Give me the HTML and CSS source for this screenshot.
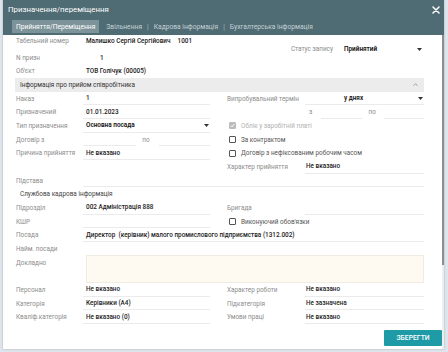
FILE: index.html
```html
<!DOCTYPE html>
<html lang="uk">
<head>
<meta charset="utf-8">
<title>Призначення/переміщення</title>
<link rel="stylesheet" href="styles.css">
</head>
<body>
<div class="dialog">
  <div class="header">
    <div class="title-row">
      <span class="title">Призначення/переміщення</span>
      <svg class="close" width="8" height="8" viewBox="0 0 8 8"><path d="M1 1L7 7M7 1L1 7" stroke="#fff" stroke-width="1.5" stroke-linecap="round"/></svg>
    </div>
    <div class="tabs">
      <span class="tab active">Прийняття/Переміщення</span>
      <span class="tab">Звільнення</span><span class="sep">|</span>
      <span class="tab">Кадрова інформація</span><span class="sep">|</span>
      <span class="tab">Бухгалтерська інформація</span>
    </div>
  </div>
  <div class="main">
    <div class="content">
      <div class="row">
        <div class="lbl">Табельний номер</div>
        <div class="val plain wide">Малишко Сергій Сергійович<span class="gap"></span>1001</div>
        <div class="rspan status"><span class="status-lbl">Статус запису</span><span class="strong">Прийнятий</span><svg class="caret" width="5" height="3" viewBox="0 0 5 3"><path d="M0 0H5L2.5 3Z" fill="#333"/></svg></div>
      </div>
      <div class="row">
        <div class="lbl">N призн</div>
        <div class="val plain num">1</div>
      </div>
      <div class="row">
        <div class="lbl">Об'єкт</div>
        <div class="val plain wide">ТОВ Голічук (00005)</div>
      </div>
      <div class="section">
        <span>Інформація про прийом співробітника</span>
        <svg class="chev" width="5" height="3" viewBox="0 0 5 3"><path d="M0.5 2.7L2.5 0.7L4.5 2.7" fill="none" stroke="#888" stroke-width="0.8"/></svg>
      </div>
      <div class="row">
        <div class="lbl">Наказ</div>
        <div class="val">1</div>
        <div class="rlbl">Випробувальний термін</div>
        <div class="rval select"><span class="strong days">у днях</span><svg class="caret" width="5" height="3" viewBox="0 0 5 3"><path d="M0 0H5L2.5 3Z" fill="#333"/></svg></div>
      </div>
      <div class="row">
        <div class="lbl">Призначений</div>
        <div class="val">01.01.2023</div>
        <div class="rval range"><span class="lbl-in">з</span><span class="line l1"></span><span class="lbl-in po">по</span><span class="line l2"></span></div>
      </div>
      <div class="row">
        <div class="lbl">Тип призначення</div>
        <div class="val select"><span class="strong">Основна посада</span><svg class="caret" width="5" height="3" viewBox="0 0 5 3"><path d="M0 0H5L2.5 3Z" fill="#333"/></svg></div>
        <div class="rspan check disabled"><span class="box checked"><svg width="5" height="5" viewBox="0 0 5 5"><path d="M0.8 2.6L2 3.8L4.2 1.2" fill="none" stroke="#fff" stroke-width="1"/></svg></span>Облік у заробітній платі</div>
      </div>
      <div class="row">
        <div class="lbl">Договір з</div>
        <div class="val range-left"><span class="line a"></span><span class="lbl-in">по</span><span class="line b"></span></div>
        <div class="rspan check"><span class="box"></span>За контрактом</div>
      </div>
      <div class="row">
        <div class="lbl">Причина прийняття</div>
        <div class="val">Не вказано</div>
        <div class="rspan check"><span class="box"></span>Договір з нефіксованим робочим часом</div>
      </div>
      <div class="row">
        <div class="rlbl">Характер прийняття</div>
        <div class="rval">Не вказано</div>
      </div>
      <div class="row">
        <div class="lbl">Підстава</div>
        <div class="val full"></div>
      </div>
      <div class="row">
        <div class="subhead">Службова кадрова інформація</div>
      </div>
      <div class="row">
        <div class="lbl">Підрозділ</div>
        <div class="val">002 Адміністрація 888</div>
        <div class="rlbl">Бригада</div>
        <div class="rval"></div>
      </div>
      <div class="row">
        <div class="lbl">КШР</div>
        <div class="val"></div>
        <div class="rspan check"><span class="box"></span>Виконуючий обов'язки</div>
      </div>
      <div class="row">
        <div class="lbl">Посада</div>
        <div class="val full">Директор&nbsp; (керівник) малого промислового підприємства (1312.002)</div>
      </div>
      <div class="row">
        <div class="lbl">Найм. посади</div>
      </div>
      <div class="row tall">
        <div class="lbl top">Докладно</div>
        <div class="memo"></div>
      </div>
      <div class="row">
        <div class="lbl">Персонал</div>
        <div class="val">Не вказано</div>
        <div class="rlbl">Характер роботи</div>
        <div class="rval">Не вказано</div>
      </div>
      <div class="row">
        <div class="lbl">Категорія</div>
        <div class="val">Керівники (А4)</div>
        <div class="rlbl">Підкатегорія</div>
        <div class="rval">Не зазначена</div>
      </div>
      <div class="row">
        <div class="lbl">Кваліф.категорія</div>
        <div class="val">Не вказано (0)</div>
        <div class="rlbl">Умови праці</div>
        <div class="rval">Не вказано</div>
      </div>
      <div class="footer">
        <button class="save">ЗБЕРЕГТИ</button>
      </div>
    </div>
    <div class="scroll"><div class="thumb"></div></div>
  </div>
</div>
</body>
</html>
```

FILE: styles.css
```css
html, body {
  margin: 0;
  padding: 0;
}
body {
  width: 448px;
  height: 352px;
  background: #dfe5ec;
  font-family: Roboto, "Liberation Sans", sans-serif;
  font-size: 6.4px;
  color: #222;
  overflow: hidden;
}
.dialog {
  width: 441px;
  height: 349px;
  margin-left: 3px;
  background: #fff;
  display: flex;
  flex-direction: column;
  box-shadow: 0 0 2px rgba(0,0,0,0.25);
}
.header {
  background: #4f6b73;
  height: 35px;
  box-sizing: border-box;
  padding: 0 4px 0 5px;
}
.title-row {
  height: 19px;
  display: flex;
  align-items: center;
  justify-content: space-between;
}
.title {
  color: #fff;
  font-size: 7.8px;
}
.tabs {
  margin-top: 1px;
  margin-left: 4px;
  height: 13px;
  display: flex;
  align-items: stretch;
  font-size: 6.7px;
}
.tab {
  display: flex;
  align-items: center;
  padding: 0 4px;
  color: #c3d1d5;
}
.tab.active {
  background: #7c9399;
  color: #fff;
  margin-right: 3px;
}
.sep {
  display: flex;
  align-items: center;
  color: #a9bcc1;
  padding: 0 1px;
}
.main {
  flex: 1;
  display: flex;
}
.content {
  flex: 1;
  padding: 2.2px 0 0 13px;
}
.scroll {
  width: 2px;
  background: #eceeef;
}
.thumb {
  height: 230px;
  background: #8a8f92;
}
.row {
  display: grid;
  grid-template-columns: 67px 127px 17px 78px 119px;
  height: 13.67px;
  width: 408px;
}
.lbl, .rlbl {
  display: flex;
  align-items: center;
  color: #8c8c8c;
  white-space: nowrap;
}
.lbl { grid-column: 1; }
.rlbl { grid-column: 4; }
.val, .rval {
  display: flex;
  align-items: center;
  border-bottom: 1px solid #ebebeb;
  box-sizing: border-box;
  white-space: nowrap;
  font-weight: 500;
  color: #1c1c1c;
}
.val { grid-column: 2; padding-left: 3px; }
.rval { grid-column: 5; padding-left: 1px; }
.val.plain { border-bottom: none; }
.val.wide { grid-column: 2 / 6; }
.val.full { grid-column: 2 / 6; }
.val.num { padding-left: 17px; }
.gap { display: inline-block; width: 7px; }
.strong { font-weight: 600; color: #111; }
.select { justify-content: space-between; padding-right: 1px; }
.rval.select { padding-left: 39px; }
.caret { flex: none; }
.rspan {
  grid-column: 4 / 6;
  display: flex;
  align-items: center;
  white-space: nowrap;
}
.status { padding-right: 2px; }
.status-lbl {
  width: 106px;
  text-align: right;
  color: #8c8c8c;
  margin-right: 11px;
}
.status .strong { flex: 1; }
.section {
  height: 13.67px;
  width: 409px;
  margin-left: -1px;
  background: #ececec;
  display: flex;
  align-items: center;
  justify-content: space-between;
  padding: 0 6px 0 5px;
  box-sizing: border-box;
  color: #333;
}
.range {
  border-bottom: none;
  padding-left: 4px;
}
.lbl-in {
  color: #8c8c8c;
  font-weight: 400;
}
.line {
  align-self: flex-end;
  height: 0;
  border-bottom: 1px solid #ebebeb;
}
.range .l1 { width: 42px; margin-left: 9px; }
.range .po { margin-left: 6px; }
.range .l2 { width: 41px; margin-left: 8px; }
.range-left {
  border-bottom: none;
  padding-left: 0;
}
.range-left .a { width: 54px; margin-right: 6px; }
.range-left .b { width: 52px; margin-left: 9px; }
.check {
  padding-left: 2px;
  color: #555;
}
.check.disabled { color: #b0b0b0; }
.box {
  width: 7px;
  height: 7px;
  box-sizing: border-box;
  border: 1px solid #555;
  border-radius: 1px;
  margin-right: 5px;
  display: flex;
  align-items: center;
  justify-content: center;
}
.box.checked {
  background: #bcbcbc;
  border-color: #bcbcbc;
}
.subhead {
  grid-column: 1 / 6;
  display: flex;
  align-items: center;
  padding-left: 4px;
  color: #444;
}
.row.tall { height: 27.34px; }
.lbl.top { align-items: flex-start; padding-top: 3px; }
.memo {
  grid-column: 2 / 6;
  margin-left: 3px;
  margin-top: -1px;
  background: #fffaf1;
  border: 1px solid #f1ece2;
  box-sizing: border-box;
}
.footer {
  display: flex;
  justify-content: flex-end;
  margin-top: 6.5px;
}
.save {
  width: 58px;
  height: 16px;
  border: none;
  border-radius: 1px;
  background: #1f9aa7;
  color: #fff;
  font-family: Roboto, "Liberation Sans", sans-serif;
  font-size: 6.8px;
  font-weight: 500;
  padding: 0;
}
```
